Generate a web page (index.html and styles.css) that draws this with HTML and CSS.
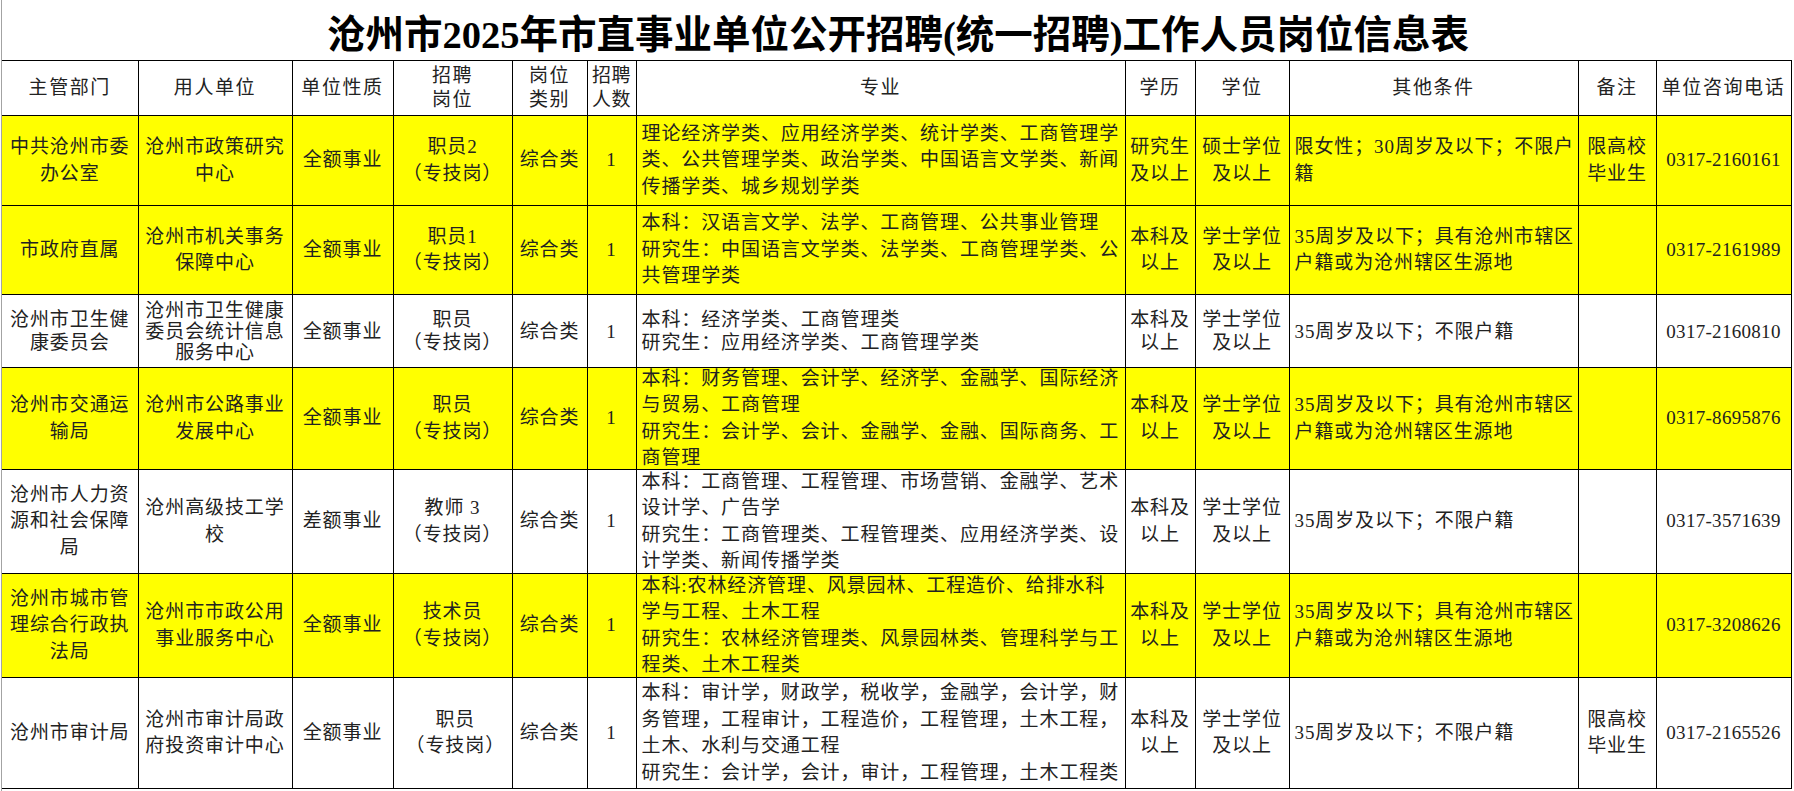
FILE: index.html
```html
<!DOCTYPE html>
<html lang="zh-CN">
<head>
<meta charset="utf-8">
<title>沧州市2025年市直事业单位公开招聘(统一招聘)工作人员岗位信息表</title>
<link rel="stylesheet" href="styles.css">
</head>
<body>
<div class="sheet">
  <div class="title">沧州市2025年市直事业单位公开招聘(统一招聘)工作人员岗位信息表</div>
  <table class="grid">
    <colgroup>
      <col class="c1"><col class="c2"><col class="c3"><col class="c4"><col class="c5"><col class="c6">
      <col class="c7"><col class="c8"><col class="c9"><col class="c10"><col class="c11"><col class="c12">
    </colgroup>
    <tr class="head">
      <td>主管部门</td><td>用人单位</td><td>单位性质</td><td>招聘<br>岗位</td><td>岗位<br>类别</td><td class="n">招聘<br>人数</td>
      <td>专业</td><td>学历</td><td>学位</td><td>其他条件</td><td>备注</td><td>单位咨询电话</td>
    </tr>
    <tr class="y r1">
      <td>中共沧州市委<br>办公室</td><td>沧州市政策研究<br>中心</td><td>全额事业</td><td>职员2<br>（专技岗）</td><td>综合类</td><td>1</td>
      <td class="l">理论经济学类、应用经济学类、统计学类、工商管理学<br>类、公共管理学类、政治学类、中国语言文学类、新闻<br>传播学类、城乡规划学类</td>
      <td>研究生<br>及以上</td><td>硕士学位<br>及以上</td><td class="l">限女性；30周岁及以下；不限户<br>籍</td><td>限高校<br>毕业生</td><td class="tel">0317-2160161</td>
    </tr>
    <tr class="y r2">
      <td>市政府直属</td><td>沧州市机关事务<br>保障中心</td><td>全额事业</td><td>职员1<br>（专技岗）</td><td>综合类</td><td>1</td>
      <td class="l">本科：汉语言文学、法学、工商管理、公共事业管理<br>研究生：中国语言文学类、法学类、工商管理学类、公<br>共管理学类</td>
      <td>本科及<br>以上</td><td>学士学位<br>及以上</td><td class="l">35周岁及以下；具有沧州市辖区<br>户籍或为沧州辖区生源地</td><td></td><td class="tel">0317-2161989</td>
    </tr>
    <tr class="r3">
      <td>沧州市卫生健<br>康委员会</td><td class="tight">沧州市卫生健康<br>委员会统计信息<br>服务中心</td><td>全额事业</td><td>职员<br>（专技岗）</td><td>综合类</td><td>1</td>
      <td class="l">本科：经济学类、工商管理类<br>研究生：应用经济学类、工商管理学类</td>
      <td>本科及<br>以上</td><td>学士学位<br>及以上</td><td class="l">35周岁及以下；不限户籍</td><td></td><td class="tel">0317-2160810</td>
    </tr>
    <tr class="y r4">
      <td>沧州市交通运<br>输局</td><td>沧州市公路事业<br>发展中心</td><td>全额事业</td><td>职员<br>（专技岗）</td><td>综合类</td><td>1</td>
      <td class="l"><div class="fit">本科：财务管理、会计学、经济学、金融学、国际经济<br>与贸易、工商管理<br>研究生：会计学、会计、金融学、金融、国际商务、工<br>商管理</div></td>
      <td>本科及<br>以上</td><td>学士学位<br>及以上</td><td class="l">35周岁及以下；具有沧州市辖区<br>户籍或为沧州辖区生源地</td><td></td><td class="tel">0317-8695876</td>
    </tr>
    <tr class="r5">
      <td>沧州市人力资<br>源和社会保障<br>局</td><td>沧州高级技工学<br>校</td><td>差额事业</td><td>教师 3<br>（专技岗）</td><td>综合类</td><td>1</td>
      <td class="l"><div class="fit">本科：工商管理、工程管理、市场营销、金融学、艺术<br>设计学、广告学<br>研究生：工商管理类、工程管理类、应用经济学类、设<br>计学类、新闻传播学类</div></td>
      <td>本科及<br>以上</td><td>学士学位<br>及以上</td><td class="l">35周岁及以下；不限户籍</td><td></td><td class="tel">0317-3571639</td>
    </tr>
    <tr class="y r6">
      <td>沧州市城市管<br>理综合行政执<br>法局</td><td>沧州市市政公用<br>事业服务中心</td><td>全额事业</td><td>技术员<br>（专技岗）</td><td>综合类</td><td>1</td>
      <td class="l"><div class="fit">本科:农林经济管理、风景园林、工程造价、给排水科<br>学与工程、土木工程<br>研究生：农林经济管理类、风景园林类、管理科学与工<br>程类、土木工程类</div></td>
      <td>本科及<br>以上</td><td>学士学位<br>及以上</td><td class="l">35周岁及以下；具有沧州市辖区<br>户籍或为沧州辖区生源地</td><td></td><td class="tel">0317-3208626</td>
    </tr>
    <tr class="r7">
      <td>沧州市审计局</td><td>沧州市审计局政<br>府投资审计中心</td><td>全额事业</td><td>&nbsp;职员<br>&nbsp;（专技岗）</td><td>综合类</td><td>1</td>
      <td class="l">本科：审计学，财政学，税收学，金融学，会计学，财<br>务管理，工程审计，工程造价，工程管理，土木工程，<br>土木、水利与交通工程<br>研究生：会计学，会计，审计，工程管理，土木工程类</td>
      <td>本科及<br>以上</td><td>学士学位<br>及以上</td><td class="l">35周岁及以下；不限户籍</td><td>限高校<br>毕业生</td><td class="tel">0317-2165526</td>
    </tr>
  </table>
</div>
</body>
</html>
```
FILE: styles.css
```css
html, body {
  margin: 0;
  padding: 0;
  background: #fff;
}
body {
  font-family: "Liberation Serif", "Noto Sans CJK SC", serif;
  color: #222;
}
.sheet {
  margin-left: 1px;
  width: 1790px;
  min-height: 791px;
  border-left: 1px solid #a3a3a3;
}
.title {
  height: 60px;
  display: flex;
  align-items: center;
  justify-content: center;
  font-size: 38.5px;
  font-weight: 700;
  color: #000;
  padding-left: 2px;
  padding-top: 1px;
  box-sizing: border-box;
}
.grid {
  border-collapse: collapse;
  table-layout: fixed;
  width: 1789px;
}
.c1 { width: 136px; }
.c2 { width: 154px; }
.c3 { width: 101px; }
.c4 { width: 119px; }
.c5 { width: 75px; }
.c6 { width: 49px; }
.c7 { width: 489px; }
.c8 { width: 70px; }
.c9 { width: 94px; }
.c10 { width: 289px; }
.c11 { width: 78px; }
.c12 { width: 135px; }
.grid td {
  border: 1px solid #000;
  padding: 0 3px;
  text-align: center;
  vertical-align: middle;
  font-size: 19px;
  letter-spacing: 0.9px;
  line-height: 26.5px;
  white-space: nowrap;
}
.grid td:first-child {
  border-left: none;
}
.grid td.l {
  text-align: left;
  padding-left: 5px;
}
.grid td.tel {
  letter-spacing: 0.3px;
}
.grid .fit {
  margin: -3px 0;
}
.grid tr.y td {
  background: #ffff00;
}
.head td {
  line-height: 24px;
  letter-spacing: 1.6px;
}
.head td.n {
  letter-spacing: 0.5px;
  padding: 0 1px;
}
.head { height: 55px; }
.r1 { height: 90px; }
.r2 { height: 89px; }
.r3 { height: 73px; }
.r3 td { line-height: 23px; }
.r3 td.tight { line-height: 21px; }
.r4 { height: 102px; }
.r5 { height: 104px; }
.r6 { height: 104px; }
.r7 { height: 111px; }
```
